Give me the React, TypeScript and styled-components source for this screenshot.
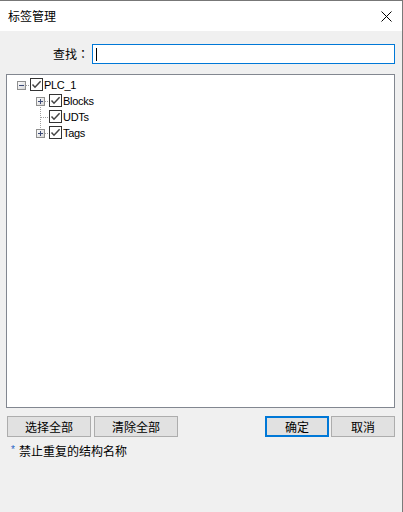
import React from "react";
import styled, { createGlobalStyle } from "styled-components";

const Global = createGlobalStyle`
  html, body { margin: 0; padding: 0; background: #f0f0f0; }
  * { box-sizing: border-box; }
`;

const CJK = `"Noto Sans CJK SC", "Microsoft YaHei", sans-serif`;
const LATIN = `"Liberation Sans", Arial, sans-serif`;

const Window = styled.div`
  width: 403px;
  height: 512px;
  display: flex;
  flex-direction: column;
  border-top: 1px solid #777;
  border-right: 1px solid #7a7a7a;
  background: #f0f0f0;
  font-family: ${CJK};
  font-size: 12px;
  color: #000;
`;

const TitleBar = styled.div`
  height: 30px;
  background: #fff;
  display: flex;
  align-items: center;
  justify-content: space-between;
  padding: 0 10px 0 8px;
`;

const Title = styled.span`
  font-size: 12px;
  line-height: 30px;
`;

const Body = styled.div`
  flex: 1;
  display: flex;
  flex-direction: column;
  padding: 13px 7px 0 6px;
`;

const SearchRow = styled.div`
  display: flex;
  align-items: center;
  padding-left: 47px;
  gap: 3px;
  height: 20px;
`;

const Label = styled.span`
  width: 36px;
  line-height: 20px;
  white-space: nowrap;
  font-family: "Noto Sans CJK TC", "Noto Sans CJK SC", sans-serif;
`;

const SearchBox = styled.div`
  flex: 1;
  height: 20px;
  border: 1px solid #0078d7;
  background: #fff;
  display: flex;
  align-items: center;
  padding-left: 3px;
`;

const Caret = styled.span`
  width: 1px;
  height: 13px;
  background: #000;
`;

const TreeBox = styled.div`
  margin-top: 10px;
  height: 334px;
  border: 1px solid #828790;
  background: #fff;
  padding: 2px 0 0 7px;
  font-family: ${LATIN};
  font-size: 11px;
  letter-spacing: -0.3px;
`;

const Row = styled.div<{ $level: number }>`
  display: flex;
  height: 16px;
  padding-left: ${(p) => p.$level * 19}px;
`;

const Connector = styled.svg`
  width: 16px;
  height: 16px;
  flex: none;
  display: block;
`;

const Check = styled.span`
  width: 13px;
  height: 13px;
  margin-top: 1px;
  flex: none;
  border: 1px solid #333;
  background: #fff;
  display: flex;
`;

const ItemText = styled.span`
  line-height: 16px;
  margin-left: 1px;
  color: #000;
  white-space: nowrap;
`;

const ButtonRow = styled.div`
  margin-top: 8px;
  display: flex;
  align-items: center;
  padding-left: 1px;
`;

const Btn = styled.div<{ $w: number; $primary?: boolean }>`
  width: ${(p) => p.$w}px;
  height: 21px;
  display: flex;
  align-items: center;
  justify-content: center;
  background: #e1e1e1;
  border: ${(p) => (p.$primary ? "2px solid #0078d7" : "1px solid #adadad")};
  font-size: 12px;
  line-height: 1;
`;

const Spacer = styled.div`
  flex: 1;
`;

const Note = styled.div`
  margin-top: 6px;
  padding-left: 5px;
  display: flex;
  align-items: flex-start;
  line-height: 16px;
`;

const Star = styled.span`
  font-family: ${LATIN};
  font-size: 10px;
  line-height: 10px;
  color: #2563c4;
  width: 8px;
  margin-top: 2px;
`;

type Kind = "minus" | "plus" | "none";

function Conn({ kind, up, down }: { kind: Kind; up?: boolean; down?: boolean }) {
  const dots: React.ReactNode[] = [];
  const cx = 7;
  const cy = 8;
  const hStart = kind === "none" ? cx + 1 : 12;
  for (let x = hStart; x < 16; x += 2) dots.push(<rect key={`h${x}`} x={x} y={cy} width={1} height={1} fill="#a0a0a0" />);
  if (up) {
    const end = kind === "none" ? cy : 4;
    for (let y = 0; y < end; y += 2) dots.push(<rect key={`u${y}`} x={cx} y={y} width={1} height={1} fill="#a0a0a0" />);
  }
  if (down) {
    const start = kind === "none" ? cy : 14;
    for (let y = start; y < 16; y += 2) dots.push(<rect key={`d${y}`} x={cx} y={y} width={1} height={1} fill="#a0a0a0" />);
  }
  return (
    <Connector viewBox="0 0 16 16" shapeRendering="crispEdges">
      <defs>
        <linearGradient id="expg" x1="0" y1="0" x2="1" y2="1">
          <stop offset="0" stopColor="#ffffff" />
          <stop offset="1" stopColor="#d4d4d4" />
        </linearGradient>
      </defs>
      {dots}
      {kind !== "none" && (
        <g>
          <rect x={3.5} y={4.5} width={8} height={8} fill="url(#expg)" stroke="#8f8f8f" />
          <rect x={5} y={8} width={5} height={1} fill="#3b4a78" />
          {kind === "plus" && <rect x={7} y={6} width={1} height={5} fill="#3b4a78" />}
        </g>
      )}
    </Connector>
  );
}

function CheckMark() {
  return (
    <Check>
      <svg width="11" height="11" viewBox="0 0 11 11">
        <polyline points="1.5,5.5 4,8.2 9.6,2.2" fill="none" stroke="#444" strokeWidth="1.5" />
      </svg>
    </Check>
  );
}

const items: { level: number; kind: Kind; label: string; up?: boolean; down?: boolean }[] = [
  { level: 0, kind: "minus", label: "PLC_1" },
  { level: 1, kind: "plus", label: "Blocks", down: true },
  { level: 1, kind: "none", label: "UDTs", up: true, down: true },
  { level: 1, kind: "plus", label: "Tags", up: true },
];

export default function App() {
  return (
    <>
      <Global />
      <Window>
        <TitleBar>
          <Title>标签管理</Title>
          <svg width="11" height="11" viewBox="0 0 11 11">
            <path d="M0.5 0.5 L10.5 10.5 M10.5 0.5 L0.5 10.5" stroke="#000" strokeWidth="1" />
          </svg>
        </TitleBar>
        <Body>
          <SearchRow>
            <Label>查找：</Label>
            <SearchBox>
              <Caret />
            </SearchBox>
          </SearchRow>
          <TreeBox>
            {items.map((it) => (
              <Row key={it.label} $level={it.level}>
                <Conn kind={it.kind} up={it.up} down={it.down} />
                <CheckMark />
                <ItemText>{it.label}</ItemText>
              </Row>
            ))}
          </TreeBox>
          <ButtonRow>
            <Btn $w={84}>选择全部</Btn>
            <Btn $w={84} style={{ marginLeft: 3 }}>清除全部</Btn>
            <Spacer />
            <Btn $w={64} $primary>确定</Btn>
            <Btn $w={64} style={{ marginLeft: 2 }}>取消</Btn>
          </ButtonRow>
          <Note>
            <Star>*</Star>
            <span>禁止重复的结构名称</span>
          </Note>
        </Body>
      </Window>
    </>
  );
}
